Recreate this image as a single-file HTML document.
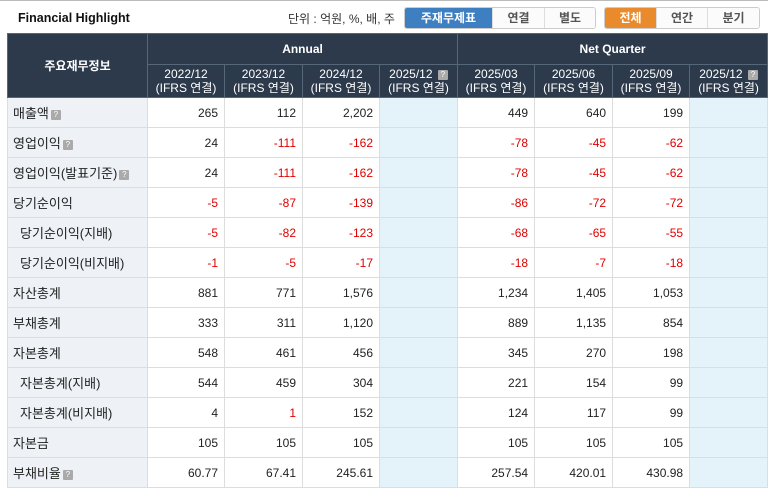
<!DOCTYPE html><html><head><meta charset="utf-8"><style>
body{margin:0;width:768px;height:489px;overflow:hidden;background:#fff;font-family:"Liberation Sans","Noto Sans CJK KR",sans-serif;font-size:12px;color:#222}
.top{position:absolute;left:0;top:0;width:768px;height:33px;border-top:1px solid #bbb;background:#fff}
.title{position:absolute;left:18px;top:10px;font-weight:bold;font-size:12.5px;color:#111}
.unit{position:absolute;left:288px;top:9px;font-size:12px;color:#333}
.bg{position:absolute;top:6px;height:20px;display:flex;border-radius:3px;overflow:hidden;border:1px solid #ccc}
.bg div{height:20px;line-height:20px;text-align:center;font-size:12px;color:#555;background:#fbfbfb;border-left:1px solid #ddd;font-weight:bold}
.bg div.on1{background:#3d7fc0;color:#fff;border:none}
.bg div.on2{background:#e98a2c;color:#fff;border:none}
table{position:absolute;left:7px;top:33px;border-collapse:collapse;table-layout:fixed;width:760px}
td,th{padding:0;border:1px solid #ddd}
th{background:#2c3a4b;color:#fff;font-weight:normal;font-size:12px;border-color:#56677a;line-height:14px}
th.g{font-weight:bold;height:30px}
th.s{height:32px}
td{height:29px;text-align:right;padding-right:6px;font-size:12px}
td.l{text-align:left;padding-left:5px;background:#eef2f7;font-size:13px}
td.l2{padding-left:12px}
td.h{background:#e4f3f9}
.r{color:#e00000}
.q{display:inline-block;width:10px;height:10px;background:#aaa;color:#fff;font-size:8px;line-height:10px;text-align:center;vertical-align:middle;margin-left:2px;border-radius:1px}
</style></head><body>
<div class="top"><div class="title">Financial Highlight</div><div class="unit">단위 : 억원, %, 배, 주</div>
<div class="bg" style="left:404px"><div class="on1" style="width:87px">주재무제표</div><div style="width:51px">연결</div><div style="width:50px">별도</div></div>
<div class="bg" style="left:604px"><div class="on2" style="width:51px">전체</div><div style="width:50px">연간</div><div style="width:51px">분기</div></div>
</div>
<table>
<colgroup><col style="width:140px"><col style="width:77px"><col style="width:78px"><col style="width:77px"><col style="width:78px"><col style="width:77px"><col style="width:78px"><col style="width:77px"><col style="width:78px"></colgroup>
<tr><th rowspan="2" style="font-weight:bold">주요재무정보</th><th colspan="4" class="g">Annual</th><th colspan="4" class="g">Net Quarter</th></tr>
<tr><th class="s">2022/12<br>(IFRS 연결)</th><th class="s">2023/12<br>(IFRS 연결)</th><th class="s">2024/12<br>(IFRS 연결)</th><th class="s">2025/12 <span class="q">?</span><br>(IFRS 연결)</th><th class="s">2025/03<br>(IFRS 연결)</th><th class="s">2025/06<br>(IFRS 연결)</th><th class="s">2025/09<br>(IFRS 연결)</th><th class="s">2025/12 <span class="q">?</span><br>(IFRS 연결)</th></tr>
<tr><td class="l">매출액<span class="q">?</span></td><td>265</td><td>112</td><td>2,202</td><td class="h"></td><td>449</td><td>640</td><td>199</td><td class="h"></td></tr>
<tr><td class="l">영업이익<span class="q">?</span></td><td>24</td><td class="r">-111</td><td class="r">-162</td><td class="h"></td><td class="r">-78</td><td class="r">-45</td><td class="r">-62</td><td class="h"></td></tr>
<tr><td class="l">영업이익(발표기준)<span class="q">?</span></td><td>24</td><td class="r">-111</td><td class="r">-162</td><td class="h"></td><td class="r">-78</td><td class="r">-45</td><td class="r">-62</td><td class="h"></td></tr>
<tr><td class="l">당기순이익</td><td class="r">-5</td><td class="r">-87</td><td class="r">-139</td><td class="h"></td><td class="r">-86</td><td class="r">-72</td><td class="r">-72</td><td class="h"></td></tr>
<tr><td class="l l2">당기순이익(지배)</td><td class="r">-5</td><td class="r">-82</td><td class="r">-123</td><td class="h"></td><td class="r">-68</td><td class="r">-65</td><td class="r">-55</td><td class="h"></td></tr>
<tr><td class="l l2">당기순이익(비지배)</td><td class="r">-1</td><td class="r">-5</td><td class="r">-17</td><td class="h"></td><td class="r">-18</td><td class="r">-7</td><td class="r">-18</td><td class="h"></td></tr>
<tr><td class="l">자산총계</td><td>881</td><td>771</td><td>1,576</td><td class="h"></td><td>1,234</td><td>1,405</td><td>1,053</td><td class="h"></td></tr>
<tr><td class="l">부채총계</td><td>333</td><td>311</td><td>1,120</td><td class="h"></td><td>889</td><td>1,135</td><td>854</td><td class="h"></td></tr>
<tr><td class="l">자본총계</td><td>548</td><td>461</td><td>456</td><td class="h"></td><td>345</td><td>270</td><td>198</td><td class="h"></td></tr>
<tr><td class="l l2">자본총계(지배)</td><td>544</td><td>459</td><td>304</td><td class="h"></td><td>221</td><td>154</td><td>99</td><td class="h"></td></tr>
<tr><td class="l l2">자본총계(비지배)</td><td>4</td><td class="r">1</td><td>152</td><td class="h"></td><td>124</td><td>117</td><td>99</td><td class="h"></td></tr>
<tr><td class="l">자본금</td><td>105</td><td>105</td><td>105</td><td class="h"></td><td>105</td><td>105</td><td>105</td><td class="h"></td></tr>
<tr><td class="l">부채비율<span class="q">?</span></td><td>60.77</td><td>67.41</td><td>245.61</td><td class="h"></td><td>257.54</td><td>420.01</td><td>430.98</td><td class="h"></td></tr>
</table>
</body></html>
